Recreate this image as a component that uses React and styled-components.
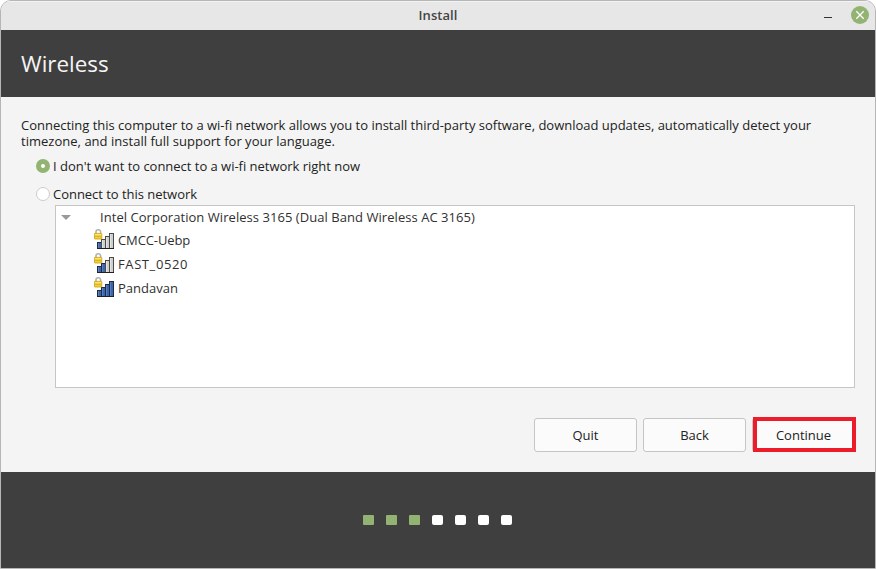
import React from 'react';
import styled, { createGlobalStyle } from 'styled-components';

const GlobalStyle = createGlobalStyle`
  * { box-sizing: border-box; }
  body { margin: 0; background: #fff; overflow: hidden; }
`;

const Window = styled.div`
  width: 876px;
  height: 569px;
  display: flex;
  flex-direction: column;
  border: 1px solid #b6b6b6;
  border-radius: 11px 11px 0 0;
  overflow: hidden;
  background: #f4f4f4;
  color: #222;
  font: 13px/16px "Open Sans", "Noto Sans", sans-serif;
`;

const TitleBar = styled.header`
  height: 29px;
  flex: none;
  display: grid;
  grid-template-columns: 1fr auto 1fr;
  align-items: center;
  padding-bottom: 2px;
  background: #e7e7e7;
  box-shadow: inset 0 1px #f3f3f3;
`;

const WindowTitle = styled.span`
  grid-column: 2;
  color: #444;
  font-weight: 600;
  letter-spacing: 0.05px;
`;

const WindowControls = styled.div`
  display: flex;
  align-items: center;
  justify-content: flex-end;
  gap: 19px;
  padding-right: 6px;
`;

const Banner = styled.div`
  height: 67px;
  flex: none;
  display: flex;
  align-items: center;
  padding-left: 20px;
  background: #3f3f3f;
`;

const Heading = styled.h1`
  margin: 0;
  color: #f4f4f4;
  font-size: 22.4px;
  font-weight: 400;
  line-height: 30px;
`;

const Content = styled.main`
  height: 375px;
  flex: none;
  display: flex;
  flex-direction: column;
  padding: 20px 19px 0 20px;
`;

const Description = styled.p`
  margin: 0 0 9px;
`;

const Option = styled.label`
  display: flex;
  align-items: center;
  gap: 3px;
  height: 16px;
  margin: 0 0 ${(p) => p.$gap}px 15px;
`;

const Radio = styled.span`
  width: 14px;
  height: 14px;
  flex: none;
  border-radius: 50%;
  border: ${(p) => (p.$checked ? '5px solid #92b372' : '1px solid #cbcbcb')};
  background: #fff;
`;

const Text = styled.span`
  display: block;
  letter-spacing: ${(p) => p.$spacing || 0}px;
  white-space: nowrap;
`;

const NetworkList = styled.div`
  width: 800px;
  height: 183px;
  margin-left: 34px;
  border: 1px solid #c6c6c6;
  background: #fff;
  color: #303030;
`;

const DeviceRow = styled.div`
  height: 22px;
  display: flex;
  align-items: center;
  gap: 29px;
  padding-left: 5px;
`;

const NetworkRow = styled.div`
  height: 24px;
  display: flex;
  align-items: center;
  gap: 4px;
  padding-left: 38px;

  svg {
    margin-bottom: 2px;
  }
`;

const Actions = styled.div`
  display: flex;
  justify-content: flex-end;
  gap: 6px;
  margin: 30px 1px 0 0;
`;

const Button = styled.button`
  position: relative;
  width: 103px;
  height: 34px;
  padding: 0;
  border: 1px solid #c5c5c5;
  border-radius: 3px;
  background: #fbfbfb;
  color: inherit;
  font: inherit;
`;

const Highlight = styled.span`
  position: absolute;
  inset: -2px -2px -1px 0;
  border: 4px solid #ed1c2b;
`;

const Footer = styled.footer`
  height: 96px;
  flex: none;
  display: flex;
  justify-content: center;
  align-items: center;
  gap: 12px;
  padding-right: 1px;
  background: #3f3f3f;
`;

const StepDot = styled.span`
  width: 11px;
  height: 10px;
  border-radius: ${(p) => (p.$done ? 1 : 2)}px;
  background: ${(p) => (p.$done ? '#92b372' : '#fff')};
`;

const BARS = [
  { x: 3, y: 13 },
  { x: 7, y: 10 },
  { x: 11, y: 7 },
  { x: 15, y: 4 },
];

function SignalIcon({ level }) {
  return (
    <svg width="20" height="20" viewBox="0 0 20 20">
      {BARS.map(({ x, y }, i) => (
        <g key={x}>
          <rect
            x={x + 0.5}
            y={y + 0.5}
            width="4"
            height={19 - y}
            fill={i < level ? '#3b66ac' : '#cfcfcd'}
            stroke={i < level ? '#1d2c48' : '#4a4a4a'}
          />
          <path d={`M${x + 1.5} ${y + 1}V19`} stroke={i < level ? '#5a80bd' : '#e4e4e2'} strokeWidth="1" />
        </g>
      ))}
      <path d="M3 19.5H20" stroke="#202020" />
      <path d="M2 5V2.8C2 1.3 2.8.8 4.3.8S6.6 1.3 6.6 2.8V5" fill="none" stroke="#b0b0ae" strokeWidth="1.5" />
      <rect x=".4" y="4.4" width="7.4" height="5.6" rx=".6" fill="#f5cd36" stroke="#c9a114" strokeWidth=".8" />
      <path d="M1 5.5H7.2" stroke="#ffea86" strokeWidth=".8" />
      <path d="M1 7.5H7.2" stroke="#dcae18" strokeWidth=".8" />
    </svg>
  );
}

const NETWORKS = [
  { name: 'CMCC-Uebp', level: 1, spacing: -0.1 },
  { name: 'FAST_0520', level: 2, spacing: 0.6 },
  { name: 'Pandavan', level: 4, spacing: 0 },
];

export default function App() {
  return (
    <>
      <GlobalStyle />
      <Window>
        <TitleBar>
          <WindowTitle>Install</WindowTitle>
          <WindowControls>
            <svg width="8" height="18" viewBox="0 0 8 18">
              <path d="M0 11.5H8" stroke="#333" />
            </svg>
            <svg width="18" height="18" viewBox="0 0 18 18">
              <circle cx="9" cy="9" r="9" fill="#92b372" />
              <path d="M5.3 5.3L12.7 12.7M12.7 5.3L5.3 12.7" stroke="#fff" strokeWidth="1.3" />
            </svg>
          </WindowControls>
        </TitleBar>
        <Banner>
          <Heading>Wireless</Heading>
        </Banner>
        <Content>
          <Description>
            <Text $spacing={-0.01}>
              Connecting this computer to a wi-fi network allows you to install third-party software, download updates,
              automatically detect your
            </Text>
            <Text $spacing={0.02}>timezone, and install full support for your language.</Text>
          </Description>
          <Option $gap={12}>
            <Radio $checked />
            <Text $spacing={-0.02}>I don't want to connect to a wi-fi network right now</Text>
          </Option>
          <Option $gap={3}>
            <Radio />
            <Text $spacing={-0.03}>Connect to this network</Text>
          </Option>
          <NetworkList>
            <DeviceRow>
              <svg width="10" height="5" viewBox="0 0 10 5">
                <path d="M0 0H10L5 5Z" fill="#999" />
              </svg>
              <Text $spacing={0.05}>Intel Corporation Wireless 3165 (Dual Band Wireless AC 3165)</Text>
            </DeviceRow>
            {NETWORKS.map((n) => (
              <NetworkRow key={n.name}>
                <SignalIcon level={n.level} />
                <Text $spacing={n.spacing}>{n.name}</Text>
              </NetworkRow>
            ))}
          </NetworkList>
          <Actions>
            <Button>Quit</Button>
            <Button>Back</Button>
            <Button>
              Continue
              <Highlight />
            </Button>
          </Actions>
        </Content>
        <Footer>
          {[0, 1, 2, 3, 4, 5, 6].map((i) => (
            <StepDot key={i} $done={i < 3} />
          ))}
        </Footer>
      </Window>
    </>
  );
}
